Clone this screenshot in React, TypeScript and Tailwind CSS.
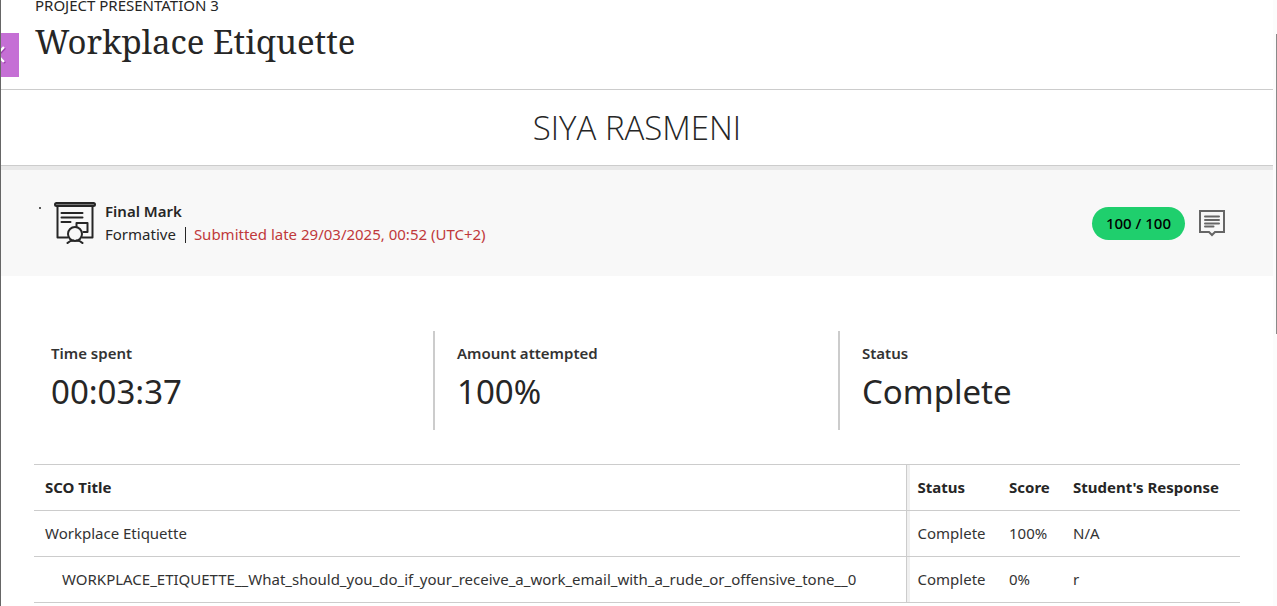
const stats = [
  { label: "Time spent", value: "00:03:37" },
  { label: "Amount attempted", value: "100%" },
  { label: "Status", value: "Complete" },
];

const rows = [
  { title: "Workplace Etiquette", status: "Complete", score: "100%", response: "N/A", nested: false },
  {
    title: "WORKPLACE_ETIQUETTE__What_should_you_do_if_your_receive_a_work_email_with_a_rude_or_offensive_tone__0",
    status: "Complete",
    score: "0%",
    response: "r",
    nested: true,
  },
];

function AssignmentIcon() {
  return (
    <svg width="42" height="42" viewBox="0 0 42 42" fill="none" stroke="#262626" strokeWidth="2" strokeLinecap="round" strokeLinejoin="round" aria-hidden="true">
      <rect x="1" y="1" width="40" height="3" rx="1.5" fill="#777" />
      <path d="M3.5 5v30.5h10M38.5 5v30.5h-10" />
      <path d="M7.5 11h21M7.5 15.5h21M7.5 20h9" />
      <path d="M22.5 25v-4h11v9h-4" />
      <circle cx="21" cy="32" r="7" />
      <path d="M13.5 41c2-2 4-2.5 6-2.5M28.5 41c-2-2-4-2.5-6-2.5" />
    </svg>
  );
}

function FeedbackIcon() {
  return (
    <svg width="26" height="28" viewBox="0 0 26 28" fill="none" stroke="#666" strokeWidth="2" aria-hidden="true">
      <path d="M1 2h24v21h-9l-3 3-3-3H1z" />
      <path d="M6 7.500h14M6 11h14M6 14.500h14M6 17.500h8.500" strokeLinecap="round" />
    </svg>
  );
}

export default function App() {
  return (
    <div className="relative flex h-screen overflow-hidden border-l border-[#666] bg-white font-['Noto_Sans','Open_Sans',sans-serif] text-[15px] leading-[23px] text-[#262626]">
      <div className="absolute top-[77px] -left-px h-[18px] w-px bg-[#a43bb5]" />
      <button aria-label="Close panel" className="absolute -left-px top-[33px] z-10 flex h-11 w-[19px] items-center bg-[#c56fd5]">
        <svg width="8" height="20" viewBox="0 0 8 20" fill="none" aria-hidden="true">
          <path d="M5 3L-2 10.500L5 18" stroke="#9a3dac" strokeWidth="2.500" />
          <path d="M4 2L-3 9.500L4 17" stroke="white" strokeWidth="2.500" />
        </svg>
      </button>
      <div className="min-w-0 flex-1">
        <header className="h-[90px] border-b border-[#ccc] pl-[34px]">
          <p className="leading-[10px]">PROJECT PRESENTATION 3</p>
          <h1 className="mt-[11px] font-['Noto_Serif','DejaVu_Serif',serif] text-[33px] leading-[42px]">Workplace Etiquette</h1>
        </header>
        <h2 className="border-b border-[#ccc] py-[14px] text-center font-['Open_Sans',sans-serif] text-[33px] leading-[47px] font-light">SIYA RASMENI</h2>
        <section className="flex h-[110px] items-center border-t-4 border-[#e8e8e8] bg-[#f8f8f8] pr-12 pl-[38px]">
          <span className="mr-[13px] mb-[30px] size-[2px] rounded-full bg-[#262626]" />
          <AssignmentIcon />
          <div className="ml-[9px] flex-1">
            <h3 className="font-semibold">Final Mark</h3>
            <p className="flex items-center">
              Formative
              <span className="mr-2 ml-[9px] h-4 w-px bg-[#262626]" />
              <span className="text-[#c0393b]">Submitted late 29/03/2025, 00:52 (UTC+2)</span>
            </p>
          </div>
          <span className="rounded-full bg-[#1fcf6d] px-[14px] py-[5px] font-medium text-black">100 / 100</span>
          <button aria-label="View feedback" className="ml-[14px]">
            <FeedbackIcon />
          </button>
        </section>
        <main className="pt-[55px] pr-[33px] pl-[33px]">
          <dl className="grid grid-cols-[399fr_405fr_402fr]">
            {stats.map((s, i) => (
              <div key={s.label} className={i === 0 ? "h-[99px] pt-[11px] pl-[17px]" : "h-[99px] border-l-2 border-[#ccc] pt-[11px] pl-[22px]"}>
                <dt className="font-semibold text-[#333]">{s.label}</dt>
                <dd className="mt-[3px] text-[33px] leading-[47px]">{s.value}</dd>
              </div>
            ))}
          </dl>
          <table className="mt-[34px] w-full border-collapse text-left">
            <thead>
              <tr className="h-[46px] border-y border-[#ccc]">
                <th className="px-[11px]">SCO Title</th>
                <th className="w-[92px] border-l border-[#ccc] px-[11px] shadow-[inset_3px_0_0_#f0f0f0]">Status</th>
                <th className="w-16 px-[11px]">Score</th>
                <th className="w-[178px] px-[11px] whitespace-nowrap">Student's Response</th>
              </tr>
            </thead>
            <tbody className="text-[#333]">
              {rows.map((r) => (
                <tr key={r.title} className="h-[46px] border-b border-[#ccc]">
                  <td className={r.nested ? "pl-7" : "pl-[11px]"}>{r.title}</td>
                  <td className="border-l border-[#ccc] px-[11px] shadow-[inset_3px_0_0_#f0f0f0]">{r.status}</td>
                  <td className="px-[11px]">{r.score}</td>
                  <td className="px-[11px]">{r.response}</td>
                </tr>
              ))}
            </tbody>
          </table>
        </main>
      </div>
      <div className="w-1 bg-[#fcfcfc] pt-[34px]">
        <div className="ml-auto h-[300px] w-px bg-[#8a8a8a]" />
      </div>
    </div>
  );
}
